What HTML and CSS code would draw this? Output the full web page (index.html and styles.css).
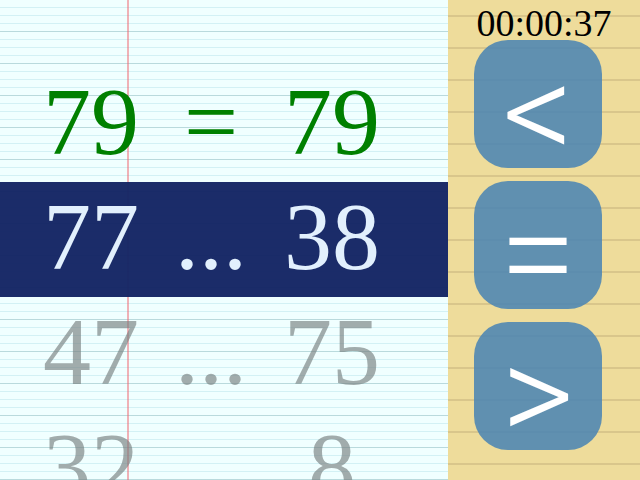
FILE: index.html
```html
<!DOCTYPE html>
<html lang="en">
<head>
<meta charset="utf-8">
<title>Compare numbers</title>
<link rel="stylesheet" href="styles.css">
</head>
<body>
<div class="app">
  <main class="sheet">
    <div class="rows">
      <div class="row solved"><span class="cell">79</span><span class="cell">=</span><span class="cell">79</span></div>
      <div class="row current"><span class="cell">77</span><span class="cell">...</span><span class="cell">38</span></div>
      <div class="row pending"><span class="cell">47</span><span class="cell">...</span><span class="cell">75</span></div>
      <div class="row pending"><span class="cell">32</span><span class="cell"></span><span class="cell">8</span></div>
    </div>
  </main>
  <aside class="side">
    <div class="timer">00:00:37</div>
    <div class="keys">
      <button class="key">&lt;</button>
      <button class="key">=</button>
      <button class="key">&gt;</button>
    </div>
  </aside>
</div>
</body>
</html>
```
FILE: styles.css
```css
html, body {
  margin: 0;
  padding: 0;
}
body {
  width: 640px;
  height: 480px;
  overflow: hidden;
}
.app {
  display: flex;
  height: 480px;
}
.sheet {
  width: 448px;
  flex: none;
  overflow: hidden;
  background-color: #f0ffff;
  background-image:
    linear-gradient(to right, transparent 127px, rgba(240, 100, 110, 0.5) 127px, rgba(240, 100, 110, 0.5) 129px, transparent 129px),
    repeating-linear-gradient(to bottom, transparent 0, transparent 31px, rgba(0, 50, 50, 0.12) 31px, rgba(0, 50, 50, 0.12) 32px),
    repeating-linear-gradient(to bottom, transparent 0, transparent 7px, rgba(0, 140, 170, 0.12) 7px, rgba(0, 140, 170, 0.12) 8px);
}
.rows {
  padding-top: 67px;
}
.row {
  display: grid;
  grid-template-columns: 182px 58px 184px;
  height: 115px;
  font-family: "Liberation Serif", serif;
  font-size: 96px;
  line-height: 109px;
}
.cell {
  display: flex;
  justify-content: center;
  white-space: nowrap;
}
.solved {
  color: #008000;
}
.current {
  background: rgba(20, 37, 100, 0.97);
  color: #e2f0fd;
}
.pending {
  color: rgba(118, 128, 128, 0.65);
}
.side {
  flex: 1;
  background-color: #eedc9b;
  background-image: repeating-linear-gradient(to bottom, transparent 0, transparent 15px, #d9c68b 15px, #d9c68b 17px, transparent 17px, transparent 32px);
}
.timer {
  height: 40px;
  font-family: "Liberation Serif", serif;
  font-size: 38px;
  line-height: 46px;
  text-align: center;
  color: #000;
}
.keys {
  display: flex;
  flex-direction: column;
  gap: 13px;
  padding-left: 26px;
}
.key {
  width: 128px;
  height: 128px;
  box-sizing: border-box;
  border: 0;
  border-radius: 34px;
  background: rgba(70, 130, 180, 0.85);
  color: #fff;
  padding: 16px 0 0;
  display: flex;
  align-items: center;
  justify-content: center;
  font-family: Roboto, sans-serif;
  font-weight: 300;
  font-size: 140px;
  line-height: 100px;
}
```
